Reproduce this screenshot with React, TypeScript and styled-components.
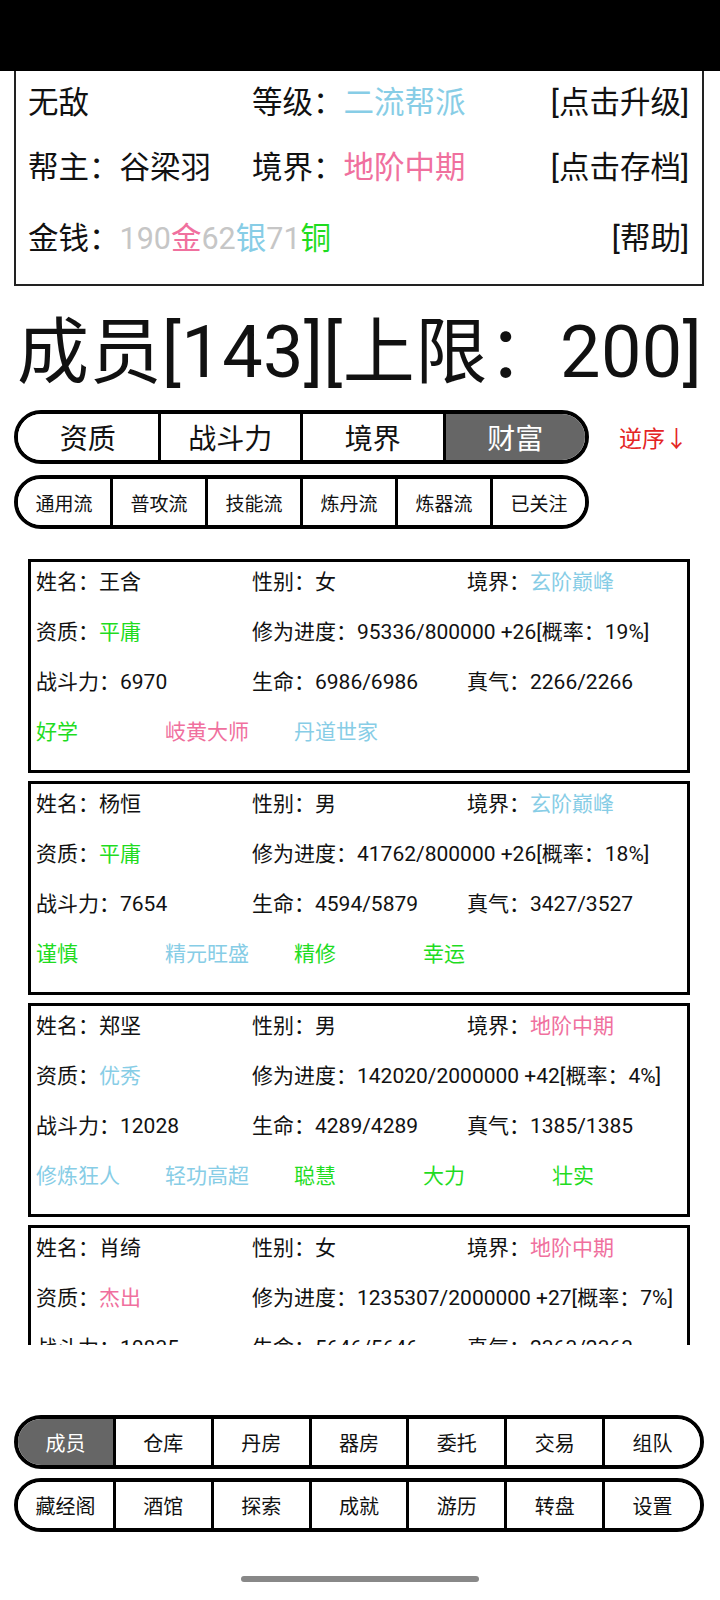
import React from "react";
import styled, { createGlobalStyle } from "styled-components";

const BLUE = "#87cde6";
const PINK = "#f0709e";
const GREEN = "#1fdc1f";
const GREY = "#c6c6c6";
const RED = "#e42424";

const GlobalStyle = createGlobalStyle`
  html, body {
    margin: 0;
    padding: 0;
    background: #fff;
  }
  body {
    font-family: Roboto, "Noto Sans CJK SC", sans-serif;
    color: #111;
  }
`;

interface Trait {
  name: string;
  color: string;
}

interface Member {
  name: string;
  gender: string;
  realm: string;
  realmColor: string;
  talent: string;
  talentColor: string;
  progress: string;
  power: string;
  hp: string;
  qi: string;
  traits: Trait[];
}

const members: Member[] = [
  {
    name: "王含",
    gender: "女",
    realm: "玄阶巅峰",
    realmColor: BLUE,
    talent: "平庸",
    talentColor: GREEN,
    progress: "95336/800000 +26[概率：19%]",
    power: "6970",
    hp: "6986/6986",
    qi: "2266/2266",
    traits: [
      { name: "好学", color: GREEN },
      { name: "岐黄大师", color: PINK },
      { name: "丹道世家", color: BLUE },
    ],
  },
  {
    name: "杨恒",
    gender: "男",
    realm: "玄阶巅峰",
    realmColor: BLUE,
    talent: "平庸",
    talentColor: GREEN,
    progress: "41762/800000 +26[概率：18%]",
    power: "7654",
    hp: "4594/5879",
    qi: "3427/3527",
    traits: [
      { name: "谨慎", color: GREEN },
      { name: "精元旺盛", color: BLUE },
      { name: "精修", color: GREEN },
      { name: "幸运", color: GREEN },
    ],
  },
  {
    name: "郑坚",
    gender: "男",
    realm: "地阶中期",
    realmColor: PINK,
    talent: "优秀",
    talentColor: BLUE,
    progress: "142020/2000000 +42[概率：4%]",
    power: "12028",
    hp: "4289/4289",
    qi: "1385/1385",
    traits: [
      { name: "修炼狂人", color: BLUE },
      { name: "轻功高超", color: BLUE },
      { name: "聪慧", color: GREEN },
      { name: "大力", color: GREEN },
      { name: "壮实", color: GREEN },
    ],
  },
  {
    name: "肖绮",
    gender: "女",
    realm: "地阶中期",
    realmColor: PINK,
    talent: "杰出",
    talentColor: PINK,
    progress: "1235307/2000000 +27[概率：7%]",
    power: "10835",
    hp: "5646/5646",
    qi: "2363/2363",
    traits: [
      { name: "坚毅", color: GREEN },
      { name: "灵根", color: BLUE },
    ],
  },
];

const sortTabs = ["资质", "战斗力", "境界", "财富"];
const filterTabs = ["通用流", "普攻流", "技能流", "炼丹流", "炼器流", "已关注"];
const navTop = ["成员", "仓库", "丹房", "器房", "委托", "交易", "组队"];
const navBottom = ["藏经阁", "酒馆", "探索", "成就", "游历", "转盘", "设置"];

export default function App() {
  return (
    <Page>
      <GlobalStyle />
      <StatusBar />

      <InfoBox>
        <InfoCell>无敌</InfoCell>
        <InfoCell>
          等级：<Colored $color={BLUE}>二流帮派</Colored>
        </InfoCell>
        <InfoAction>[点击升级]</InfoAction>

        <InfoCell>帮主：谷梁羽</InfoCell>
        <InfoCell>
          境界：<Colored $color={PINK}>地阶中期</Colored>
        </InfoCell>
        <InfoAction>[点击存档]</InfoAction>

        <InfoCell>
          金钱：<Colored $color={GREY}>190</Colored>
          <Colored $color={PINK}>金</Colored>
          <Colored $color={GREY}>62</Colored>
          <Colored $color={BLUE}>银</Colored>
          <Colored $color={GREY}>71</Colored>
          <Colored $color={GREEN}>铜</Colored>
        </InfoCell>
        <InfoCell />
        <InfoAction>[帮助]</InfoAction>
      </InfoBox>

      <Title>成员[143][上限：200]</Title>

      <SortRow>
        <Segmented $width={575}>
          {sortTabs.map((t) => (
            <Segment key={t} $active={t === "财富"} $size={28}>
              {t}
            </Segment>
          ))}
        </Segmented>
        <ReverseLink>逆序↓</ReverseLink>
      </SortRow>

      <FilterRow>
        <Segmented $width={575}>
          {filterTabs.map((t) => (
            <Segment key={t} $size={19}>
              {t}
            </Segment>
          ))}
        </Segmented>
      </FilterRow>

      <ListViewport>
        {members.map((m) => (
          <Card key={m.name}>
            <CardRow>
              <span>姓名：{m.name}</span>
              <span>性别：{m.gender}</span>
              <span>
                境界：<Colored $color={m.realmColor}>{m.realm}</Colored>
              </span>
            </CardRow>
            <CardRow>
              <span>
                资质：<Colored $color={m.talentColor}>{m.talent}</Colored>
              </span>
              <Wide>修为进度：{m.progress}</Wide>
            </CardRow>
            <CardRow>
              <span>战斗力：{m.power}</span>
              <span>生命：{m.hp}</span>
              <span>真气：{m.qi}</span>
            </CardRow>
            <TraitRow>
              {m.traits.map((tr) => (
                <Colored key={tr.name} $color={tr.color}>
                  {tr.name}
                </Colored>
              ))}
            </TraitRow>
          </Card>
        ))}
      </ListViewport>

      <NavArea>
        <Segmented $width={690}>
          {navTop.map((t) => (
            <Segment key={t} $active={t === "成员"} $size={20}>
              {t}
            </Segment>
          ))}
        </Segmented>
        <Segmented $width={690}>
          {navBottom.map((t) => (
            <Segment key={t} $size={20}>
              {t}
            </Segment>
          ))}
        </Segmented>
      </NavArea>

      <HomeIndicator />
    </Page>
  );
}

const Page = styled.div`
  width: 720px;
  height: 1600px;
  overflow: hidden;
  background: #fff;
`;

const StatusBar = styled.div`
  height: 71px;
  background: #000;
`;

const InfoBox = styled.div`
  box-sizing: border-box;
  margin-left: 14px;
  width: 690px;
  height: 215px;
  border: 2px solid #222;
  border-top: none;
  padding: 0 13px 0 12px;
  display: grid;
  grid-template-columns: 224px 1fr auto;
  grid-template-rows: 58px 72px 70px;
  align-items: center;
  font-size: 30.5px;
`;

const InfoCell = styled.div`
  white-space: nowrap;
`;

const InfoAction = styled.div`
  white-space: nowrap;
  text-align: right;
`;

const Colored = styled.span<{ $color: string }>`
  color: ${(p) => p.$color};
`;

const Title = styled.div`
  height: 124px;
  display: flex;
  align-items: center;
  padding-left: 17px;
  padding-bottom: 6px;
  box-sizing: border-box;
  font-size: 72px;
  letter-spacing: 0.4px;
  white-space: nowrap;
`;

const SortRow = styled.div`
  display: flex;
  align-items: center;
  margin-left: 14px;
  gap: 30px;
`;

const FilterRow = styled.div`
  margin: 11px 0 0 14px;
`;

const Segmented = styled.div<{ $width: number }>`
  box-sizing: border-box;
  width: ${(p) => p.$width}px;
  height: 54px;
  border: 4px solid #000;
  border-radius: 27px;
  overflow: hidden;
  display: flex;
  background: #fff;
`;

const Segment = styled.div<{ $active?: boolean; $size: number }>`
  flex: 1;
  display: flex;
  align-items: center;
  justify-content: center;
  font-size: ${(p) => p.$size}px;
  background: ${(p) => (p.$active ? "#666" : "#fff")};
  color: ${(p) => (p.$active ? "#fff" : "#111")};
  white-space: nowrap;

  & + & {
    border-left: 3px solid #000;
  }
`;

const ReverseLink = styled.div`
  color: ${RED};
  font-size: 23px;
  white-space: nowrap;
`;

const ListViewport = styled.div`
  margin-top: 20px;
  height: 796px;
  padding-top: 10px;
  box-sizing: border-box;
  overflow: hidden;
  display: flex;
  flex-direction: column;
  gap: 8px;
`;

const Card = styled.div`
  box-sizing: border-box;
  flex-shrink: 0;
  margin-left: 28px;
  width: 662px;
  height: 214px;
  border: 3px solid #000;
  padding: 0 0 0 5px;
  display: flex;
  flex-direction: column;
  gap: 14px;
  font-size: 21px;
`;

const CardRow = styled.div`
  height: 36px;
  display: grid;
  grid-template-columns: 216px 215px 1fr;
  align-items: center;
  white-space: nowrap;
`;

const Wide = styled.span`
  grid-column: span 2;
`;

const TraitRow = styled.div`
  height: 36px;
  display: grid;
  grid-template-columns: repeat(5, 129px);
  align-items: center;
  white-space: nowrap;
`;

const NavArea = styled.div`
  margin: 70px 0 0 14px;
  display: flex;
  flex-direction: column;
  gap: 9px;
`;

const HomeIndicator = styled.div`
  margin: 44px auto 0;
  width: 238px;
  height: 6px;
  border-radius: 3px;
  background: #888;
`;
